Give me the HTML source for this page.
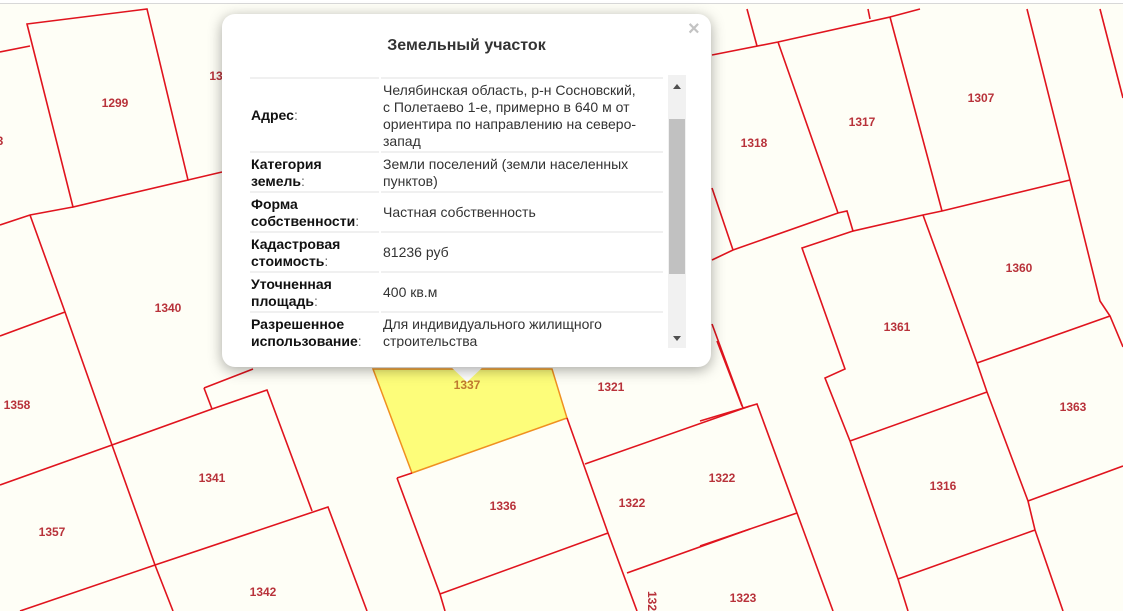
<!DOCTYPE html>
<html><head><meta charset="utf-8"><style>
html,body{margin:0;padding:0;width:1123px;height:610px;overflow:hidden;background:#fff;font-family:"Liberation Sans",Arial,sans-serif}
#map{position:absolute;left:0;top:3px;width:1123px;height:607px;background:#fefef6;border-top:1px solid #d8d8d8}
svg{position:absolute;left:0;top:0}
.lb{font:bold 12px "Liberation Sans",sans-serif;fill:#b8323a}
#pop{position:absolute;left:222px;top:14px;width:489px;height:353px;background:#fff;border-radius:13px;box-shadow:0 3px 14px rgba(0,0,0,.35)}
#arrow{position:absolute;left:451px;top:367px;width:0;height:0;border-left:16px solid transparent;border-right:16px solid transparent;border-top:15px solid #fff}
#title{position:absolute;left:0;width:489px;top:23px;text-align:center;font-weight:bold;font-size:16px;color:#333}
#close{position:absolute;left:466px;top:4px;font-size:20px;color:#c3c3c3;font-weight:bold}
#scroll{position:absolute;left:28px;top:61px;width:437px;height:273px;overflow:hidden}
table{border-collapse:separate;border-spacing:2px 1px;position:absolute;left:-2px;top:1px;width:417px;font-size:14px;line-height:17px}
td{vertical-align:middle;border-bottom:2px solid #f0f0f0;padding:0}
td.k{width:128px;font-weight:bold;color:#111;padding-left:1px}
td.k i{font-style:normal;font-weight:normal;color:#666}
td.v{color:#333;padding-left:2px;padding-right:8px}
#sb{position:absolute;left:446px;top:61px;width:18px;height:273px;background:#f1f1f1}
#th{position:absolute;left:1px;top:44px;width:16px;height:155px;background:#c1c1c1}
</style></head><body>
<div id="map"><svg width="1123" height="607" viewBox="0 3 1123 607">
<polygon points="373,368 552,368 567,417 412,472" fill="#fdfd7a" stroke="#f09020" stroke-width="1.5"/>
<g fill="none" stroke="#e0141e" stroke-width="1.6">
<polyline points="0,51 30,45"/>
<polygon points="27,23 147,8 188,179 73,206"/>
<polyline points="0,224 30,214 73,206"/>
<polyline points="188,179 222,171"/>
<polyline points="30,214 65,311 112,444 155,564 173,610"/>
<polyline points="0,335 65,311"/>
<polyline points="0,484 112,444 212,408 267,389 312,510"/>
<polyline points="204,387 212,408"/>
<polyline points="204,387 253,368"/>
<polyline points="155,564 328,506 367,610"/>
<polyline points="20,610 155,564"/>
<polyline points="397,477 412,472"/>
<polyline points="397,477 440,593 445,610"/>
<polyline points="440,593 608,532"/>
<polyline points="567,417 608,532 637,610"/>
<polyline points="585,463 750,405"/>
<polyline points="717,340 742,405"/>
<polyline points="627,572 750,528"/>
<polyline points="747,8 757,45"/>
<polyline points="712,54 778,41 890,16 920,8"/>
<polyline points="868,8 870,18"/>
<polyline points="778,41 838,212 847,210 853,230 923,214 942,210 1070,179"/>
<polyline points="890,16 942,210"/>
<polyline points="1027,8 1070,179 1100,300 1110,315 1123,346"/>
<polyline points="1100,8 1123,97"/>
<polyline points="712,259 733,249 838,212"/>
<polyline points="712,187 733,249"/>
<polyline points="853,230 802,247 845,368 825,377 850,440 898,578 908,610"/>
<polyline points="923,214 977,362 987,391 1028,500 1035,529 1063,610"/>
<polyline points="977,362 1110,315"/>
<polyline points="1028,500 1123,465"/>
<polyline points="850,440 987,391"/>
<polyline points="898,578 1035,529"/>
<polyline points="712,323 743,407"/>
<polyline points="700,420 757,403 797,512 833,610"/>
<polyline points="700,545 797,512"/>
</g>
<g class="lb" text-anchor="middle">
<text x="115" y="106">1299</text><text x="0" y="144">3</text><text x="216" y="79">13</text>
<text x="168" y="311">1340</text><text x="17" y="408">1358</text><text x="212" y="481">1341</text>
<text x="52" y="535">1357</text><text x="263" y="595">1342</text>
<text x="467" y="388" style="fill:#c07a30">1337</text><text x="611" y="390">1321</text>
<text x="503" y="509">1336</text><text x="632" y="506">1322</text><text x="722" y="481">1322</text>
<text x="743" y="601">1323</text><text x="754" y="146">1318</text><text x="862" y="125">1317</text>
<text x="981" y="101">1307</text><text x="1019" y="271">1360</text><text x="897" y="330">1361</text>
<text x="1073" y="410">1363</text><text x="943" y="489">1316</text>
<text x="648" y="600" transform="rotate(90 648 600)">132</text>
</g></svg></div>
<div id="arrow"></div>
<div id="pop">
<div id="title">Земельный участок</div>
<div id="close">×</div>
<div id="scroll"><table>
<tr><td class="k" style="height:0;line-height:0">&nbsp;</td><td class="v" style="line-height:0">&nbsp;</td></tr>
<tr><td class="k" style="height:71px">Адрес<i>:</i></td><td class="v">Челябинская область, р-н Сосновский, с&nbsp;Полетаево 1-е, примерно в 640 м от ориентира по направлению на северо-запад</td></tr>
<tr><td class="k" style="height:37px">Категория земель<i>:</i></td><td class="v">Земли поселений (земли населенных пунктов)</td></tr>
<tr><td class="k" style="height:37px">Форма собственности<i>:</i></td><td class="v">Частная собственность</td></tr>
<tr><td class="k" style="height:37px">Кадастровая стоимость<i>:</i></td><td class="v">81236 руб</td></tr>
<tr><td class="k" style="height:37px">Уточненная площадь<i>:</i></td><td class="v">400 кв.м</td></tr>
<tr><td class="k" style="height:37px">Разрешенное использование<i>:</i></td><td class="v">Для индивидуального жилищного строительства</td></tr>
</table></div>
<div id="sb"><div id="th"></div>
<svg width="18" height="273"><path d="M5,14 L9,9 L13,14Z" fill="#505050"/><path d="M5,261 L9,266 L13,261Z" fill="#505050"/></svg></div>
</div>
</body></html>
